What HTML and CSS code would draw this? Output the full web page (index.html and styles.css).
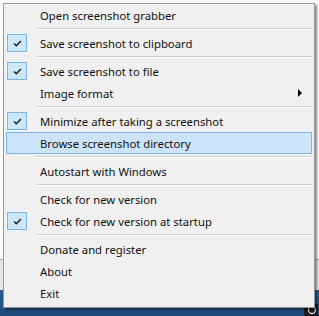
FILE: index.html
```html
<!DOCTYPE html>
<html>
<head>
<meta name="viewport" content="width=device-width, initial-scale=1">
<link rel="stylesheet" href="styles.css">
</head>
<body>

<div class="desktop">
  <div class="window"></div>
  <div class="windowBottom"></div>
  <div class="taskbar">
    <svg class="trayIcon" width="14" height="14" viewBox="0 0 14 14">
      <rect x="0" y="2" width="14" height="12" fill="#1b1b1b"/>
      <circle cx="8" cy="8" r="3.5" fill="none" stroke="#d8d8d8" stroke-width="1.3"/>
    </svg>
  </div>
</div>

<div class="menu">
  <div class="item"><span class="gutter"></span>Open screenshot grabber</div>
  <div class="separator"></div>
  <div class="item"><span class="gutter"><span class="check"><svg width="9" height="7" viewBox="0 0 9 7"><path d="M1 3.5 L3.3 5.8 L8 1" fill="none" stroke="#1a1a1a" stroke-width="1.4"/></svg></span></span>Save screenshot to clipboard</div>
  <div class="separator"></div>
  <div class="item"><span class="gutter"><span class="check"><svg width="9" height="7" viewBox="0 0 9 7"><path d="M1 3.5 L3.3 5.8 L8 1" fill="none" stroke="#1a1a1a" stroke-width="1.4"/></svg></span></span>Save screenshot to file</div>
  <div class="item"><span class="gutter"></span>Image format<span class="arrow"></span></div>
  <div class="separator"></div>
  <div class="item"><span class="gutter"><span class="check"><svg width="9" height="7" viewBox="0 0 9 7"><path d="M1 3.5 L3.3 5.8 L8 1" fill="none" stroke="#1a1a1a" stroke-width="1.4"/></svg></span></span>Minimize after taking a screenshot</div>
  <div class="item selected"><span class="gutter"></span>Browse screenshot directory</div>
  <div class="separator"></div>
  <div class="item"><span class="gutter"></span>Autostart with Windows</div>
  <div class="separator"></div>
  <div class="item"><span class="gutter"></span>Check for new version</div>
  <div class="item"><span class="gutter"><span class="check"><svg width="9" height="7" viewBox="0 0 9 7"><path d="M1 3.5 L3.3 5.8 L8 1" fill="none" stroke="#1a1a1a" stroke-width="1.4"/></svg></span></span>Check for new version at startup</div>
  <div class="separator"></div>
  <div class="item"><span class="gutter"></span>Donate and register</div>
  <div class="item"><span class="gutter"></span>About</div>
  <div class="item"><span class="gutter"></span>Exit</div>
</div>

</body>
</html>
```

FILE: styles.css
```css
body {
  margin: 0;
  width: 319px;
  height: 316px;
  overflow: hidden;
  font-family: "Noto Sans", "Open Sans", sans-serif;
  font-size: 11.3px;
  color: #111;
}

.desktop {
  display: flex;
  flex-direction: column;
  height: 316px;
}

.window {
  height: 259px;
  background: #fafafa;
  border-bottom: 1px solid #a6a6a6;
}

.windowBottom {
  height: 30px;
  background: #e4e4e4;
}

.taskbar {
  flex: 1;
  background: linear-gradient(#2d5d8e, #1d4a79);
  display: flex;
  justify-content: flex-end;
  align-items: flex-end;
}

.trayIcon {
  display: block;
  margin-right: 1px;
}

.menu {
  position: absolute;
  left: 3px;
  top: 3px;
  width: 306px;
  padding: 0 2px 3px 2px;
  background: #f0f0f0;
  border: 1px solid #979797;
  box-shadow: 2px 2px 2px rgba(0, 0, 0, 0.45);
}

.item {
  height: 22px;
  display: flex;
  align-items: center;
  white-space: nowrap;
  box-sizing: border-box;
  border: 1px solid transparent;
}

.item.selected {
  background: #cce4f9;
  border-color: #7fb6ea;
}

.gutter {
  width: 33px;
  display: flex;
  align-items: center;
  flex-shrink: 0;
}

.check {
  width: 18px;
  height: 16px;
  background: #cce6fa;
  border: 1px solid #7bb4e6;
  display: flex;
  align-items: center;
  justify-content: center;
}

.check svg {
  display: block;
}

.arrow {
  margin-left: auto;
  margin-right: 9px;
  width: 0;
  height: 0;
  border-top: 4px solid transparent;
  border-bottom: 4px solid transparent;
  border-left: 4px solid #000;
}

.separator {
  height: 6px;
  display: flex;
  flex-direction: column;
  justify-content: center;
}

.separator::before {
  content: "";
  margin-left: 30px;
  margin-right: 0;
  border-top: 1px solid #d2d2d2;
  border-bottom: 1px solid #fff;
}
```
